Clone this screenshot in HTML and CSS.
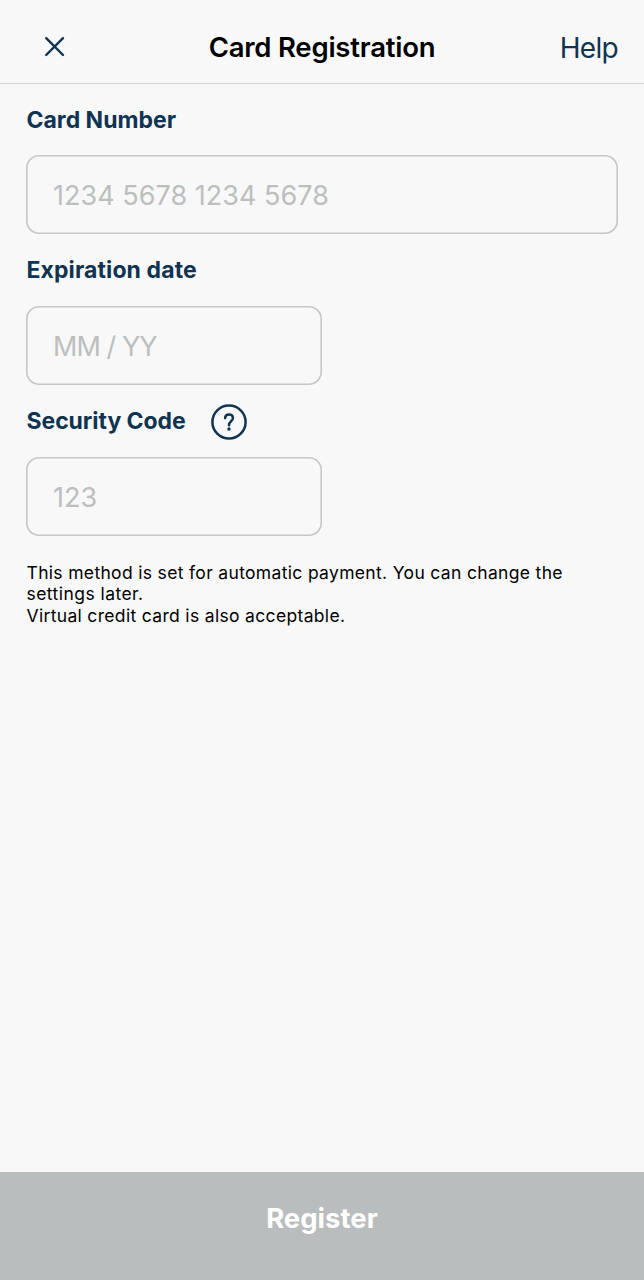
FILE: index.html
```html
<!DOCTYPE html>
<html lang="en">
<head>
<meta charset="utf-8">
<title>Card Registration</title>
<link rel="stylesheet" href="styles.css">
</head>
<body>
<div class="screen">
  <header class="topbar">
    <button class="close" type="button" aria-label="Close">
      <svg width="22" height="22" viewBox="0 0 22 22"><path d="M2.2 2.2 19 19M19 2.2 2.2 19"/></svg>
    </button>
    <h1 class="title">Card Registration</h1>
    <a class="help-link">Help</a>
  </header>
  <main class="form">
    <label class="label"><span class="label-number">Card Number</span></label>
    <div class="field field-wide"><span class="hint-number">1234 5678 1234 5678</span></div>
    <label class="label"><span class="label-date">Expiration date</span></label>
    <div class="field"><span class="hint-date">MM / YY</span></div>
    <label class="label"><span class="label-code">Security Code</span>
      <svg class="info" width="36" height="36" viewBox="0 0 36 36"><circle cx="18" cy="18" r="16.6"/><path d="M14.1 14.1C14.2 11.9 15.7 10.5 18 10.5C20.4 10.5 21.9 11.9 21.9 14C21.9 15.7 21.1 16.6 19.9 17.5C18.6 18.5 18 19.3 18 21.3"/><circle class="info-dot" cx="18" cy="25" r="1.7"/></svg>
    </label>
    <div class="field"><span class="hint-code">123</span></div>
    <p class="note"><span class="note-first">This method is set for automatic payment. You can change the</span><br><span class="note-second">settings later.</span><br><span class="note-third">Virtual credit card is also acceptable.</span></p>
  </main>
  <button class="register" type="button"><span>Register</span></button>
</div>
</body>
</html>
```
FILE: styles.css
```css
* { box-sizing: border-box; }
body { margin: 0; font-family: Inter, "Liberation Sans", sans-serif; background: #f8f8f8; color: #000; }
button { border: 0; padding: 0; background: none; font: inherit; }
.screen { height: 1280px; display: flex; flex-direction: column; }
.topbar { height: 84px; flex: none; display: grid; grid-template-columns: 120px 1fr 120px; align-items: center; padding: 10px 26px 0; border-bottom: 1px solid #d2d3d4; }
.close { justify-self: start; width: 22px; height: 22px; margin-left: 18px; }
.close svg { display: block; fill: none; stroke: #0f3350; stroke-width: 2.4; stroke-linecap: round; }
.title { margin: 0; text-align: center; font-size: 27.5px; line-height: 32px; font-weight: 600; letter-spacing: -0.22px; white-space: nowrap; }
.help-link { justify-self: end; padding-top: 2px; font-size: 28px; line-height: 32px; font-weight: 400; letter-spacing: -0.7px; color: #0f3350; }
.form { flex: 1; padding: 0 26px; }
.label { display: flex; align-items: center; height: 72px; padding-left: 0.5px; font-size: 23px; line-height: 30px; font-weight: 650; color: #0f3350; }
.label:first-child { height: 71px; }
.label-date { letter-spacing: 0.1px; }
.label-code { letter-spacing: -0.06px; }
.field { height: 79px; width: 296px; box-shadow: inset 0 0 0 1.6px #c5c6c6; border-radius: 13px; display: flex; align-items: center; padding: 2px 0 0 27px; font-size: 27px; line-height: 34px; color: #bdbebe; }
.field-wide { width: 592px; }
.hint-number { letter-spacing: 0.03px; }
.hint-date { letter-spacing: -0.95px; }
.info { margin: 2px 0 0 25.3px; fill: none; stroke: #0f3350; stroke-width: 2.5; stroke-linecap: round; }
.info-dot { fill: #0f3350; stroke: none; }
.note { margin: 26px 0 0; padding-left: 0.5px; font-size: 17.5px; line-height: 21.3px; letter-spacing: 0.33px; white-space: nowrap; }
.note-second { letter-spacing: 0.45px; }
.register { height: 108px; flex: none; display: flex; justify-content: center; padding-top: 29px; background: #babdbe; color: #fff; font-size: 27.5px; line-height: 34px; font-weight: 700; }
```
